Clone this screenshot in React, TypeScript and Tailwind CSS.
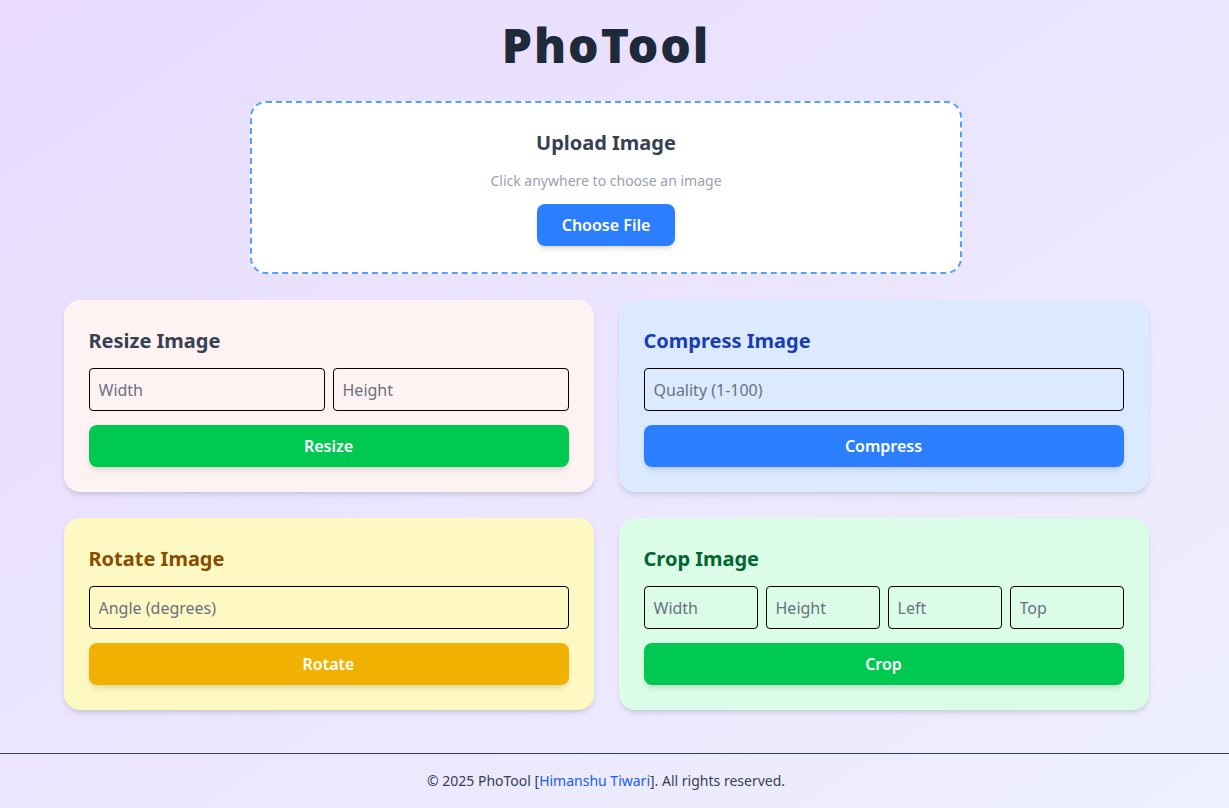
import React from 'react'

const font = { fontFamily: '"Noto Sans", "Open Sans", sans-serif' }

type Tool = {
  title: string
  titleClass: string
  cardClass: string
  buttonClass: string
  button: string
  fields: string[]
  cols: string
}

const tools: Tool[] = [
  {
    title: 'Resize Image',
    titleClass: 'text-gray-700',
    cardClass: 'bg-red-50',
    buttonClass: 'bg-green-500',
    button: 'Resize',
    fields: ['Width', 'Height'],
    cols: 'grid-cols-2',
  },
  {
    title: 'Compress Image',
    titleClass: 'text-blue-800',
    cardClass: 'bg-blue-100',
    buttonClass: 'bg-blue-500',
    button: 'Compress',
    fields: ['Quality (1-100)'],
    cols: 'grid-cols-1',
  },
  {
    title: 'Rotate Image',
    titleClass: 'text-yellow-800',
    cardClass: 'bg-yellow-100',
    buttonClass: 'bg-yellow-500',
    button: 'Rotate',
    fields: ['Angle (degrees)'],
    cols: 'grid-cols-1',
  },
  {
    title: 'Crop Image',
    titleClass: 'text-green-800',
    cardClass: 'bg-green-100',
    buttonClass: 'bg-green-500',
    button: 'Crop',
    fields: ['Width', 'Height', 'Left', 'Top'],
    cols: 'grid-cols-4',
  },
]

function ToolCard({ tool }: { tool: Tool }) {
  return (
    <div className={`${tool.cardClass} rounded-2xl shadow-md px-[25px] pt-[27px] pb-[25px]`}>
      <h2 className={`${tool.titleClass} text-xl font-bold leading-7 mb-[13px]`}>{tool.title}</h2>
      <div className={`grid ${tool.cols} gap-2`}>
        {tool.fields.map((f) => (
          <input
            key={f}
            placeholder={f}
            className="h-[43px] w-full min-w-0 border border-black rounded px-[9px] text-base bg-transparent placeholder:text-gray-500 outline-none"
            style={font}
          />
        ))}
      </div>
      <button
        className={`${tool.buttonClass} mt-[14px] h-[42px] w-full rounded-lg shadow-md text-white font-semibold text-base`}
        style={font}
      >
        {tool.button}
      </button>
    </div>
  )
}

export default function App() {
  return (
    <div
      className="min-h-[808px] flex flex-col bg-gradient-to-br from-[#e8dbff] to-[#eef0fe]"
      style={font}
    >
      <main className="flex-1 flex flex-col items-center pt-[21px] pr-[17px]">
        <h1 className="text-5xl leading-[48px] font-black tracking-[2px] text-gray-800 mb-8">PhoTool</h1>

        <div className="w-[712px] h-[173px] bg-white border-2 border-dashed border-blue-400 rounded-2xl flex flex-col items-center pt-[26px]">
          <h2 className="text-xl font-bold text-gray-700 leading-7">Upload Image</h2>
          <p className="text-sm text-gray-400 mt-[14px] leading-5">Click anywhere to choose an image</p>
          <button className="mt-[13px] h-[42px] px-[25px] rounded-lg bg-blue-500 text-white font-semibold text-base shadow-md">
            Choose File
          </button>
        </div>

        <div className="w-[1085px] grid grid-cols-2 gap-x-[25px] gap-y-[26px] mt-[26px]">
          {tools.map((t) => (
            <ToolCard key={t.title} tool={t} />
          ))}
        </div>
      </main>

      <footer className="mt-[42px] border-t border-gray-700 h-[55px] flex items-center justify-center pr-[17px] text-sm text-gray-700">
        <p>
          © 2025 PhoTool [<span className="text-blue-600">Himanshu Tiwari</span>]. All rights reserved.
        </p>
      </footer>
    </div>
  )
}
